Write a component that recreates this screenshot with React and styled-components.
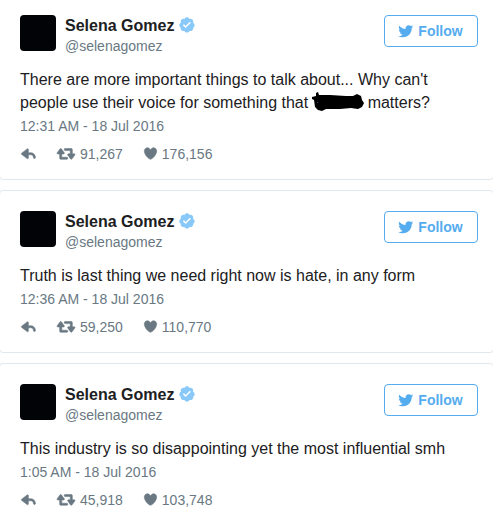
import React from 'react'
import styled, { createGlobalStyle } from 'styled-components'

const tweets = [
    {
        id: 1,
        before: "There are more important things to talk about... Why can't people use their voice for something that ",
        after: 'matters?',
        time: '12:31 AM - 18 Jul 2016',
        retweets: '91,267',
        likes: '176,156',
    },
    {
        id: 2,
        before: 'Truth is last thing we need right now is hate, in any form',
        time: '12:36 AM - 18 Jul 2016',
        retweets: '59,250',
        likes: '110,770',
    },
    {
        id: 3,
        before: 'This industry is so disappointing yet the most influential smh',
        time: '1:05 AM - 18 Jul 2016',
        retweets: '45,918',
        likes: '103,748',
    },
]

const GlobalStyle = createGlobalStyle`
    * {
        box-sizing: border-box;
    }
    body {
        margin: 0;
        overflow-x: hidden;
        background: #fff;
        color: #1c2022;
        font-family: "Liberation Sans", Arial, sans-serif;
        font-size: 16px;
    }
    svg {
        display: block;
        flex: none;
        fill: currentColor;
    }
`

// the feed bleeds past the edges of the window
const Feed = styled.main`
    display: flex;
    flex-direction: column;
    gap: 10px;
    margin: -6px -1px 0;
`

const Card = styled.article`
    padding: 20px 15px 16px 20px;
    border: 1px solid #e1e8ed;
    border-radius: 4px;
`

const Header = styled.header`
    display: flex;
    align-items: flex-start;
    gap: 9px;
`

const Avatar = styled.div`
    width: 36px;
    height: 36px;
    border-radius: 4px;
    background: #020307;
`

const Author = styled.a`
    flex: 1;
    color: inherit;
    text-decoration: none;
`

const Name = styled.span`
    display: flex;
    align-items: center;
    gap: 5px;
    height: 22px;
    font-weight: bold;
`

const Handle = styled.span`
    display: block;
    color: #697882;
    font-size: 14px;
    line-height: 18px;
`

const FollowButton = styled.button`
    display: flex;
    align-items: center;
    justify-content: center;
    gap: 4px;
    width: 94px;
    height: 32px;
    padding: 0 2px 0 0;
    border: 1px solid #55acee;
    border-radius: 4px;
    background: #fff;
    color: #55acee;
    font: bold 14px "Liberation Sans", Arial, sans-serif;
    cursor: pointer;
`

const Text = styled.p`
    margin: 13px 0 0;
    line-height: 23px;
`

const Scribble = styled.svg`
    display: inline-block;
    vertical-align: middle;
    margin: -4px 2px -4px 0;
    fill: #000;
`

const Time = styled.a`
    display: block;
    margin-top: 3px;
    color: #697882;
    font-size: 14px;
    line-height: 18px;
    text-decoration: none;
`

const Actions = styled.div`
    display: flex;
    gap: 20px;
    margin-top: 9px;
`

const Action = styled.button`
    display: flex;
    align-items: center;
    gap: 4px;
    padding: 0;
    border: 0;
    background: none;
    color: #697882;
    font: 14px "Liberation Sans", Arial, sans-serif;
    cursor: pointer;
`

const ActionIcon = styled.svg`
    stroke: currentColor;
    stroke-width: 2;
    stroke-linejoin: round;
`

function BirdIcon() {
    return (
        <svg width="17" height="17" viewBox="0 0 72 72" aria-hidden="true">
            <path d="M68.812 15.14c-2.348 1.04-4.87 1.744-7.52 2.06 2.704-1.62 4.78-4.186 5.757-7.243-2.53 1.5-5.33 2.592-8.314 3.176C56.35 10.59 52.948 9 49.182 9c-7.23 0-13.092 5.86-13.092 13.093 0 1.026.118 2.02.338 2.98C25.543 24.527 15.9 19.318 9.44 11.396c-1.125 1.936-1.77 4.184-1.77 6.58 0 4.543 2.312 8.552 5.824 10.9-2.146-.07-4.165-.658-5.93-1.64-.002.056-.002.11-.002.163 0 6.345 4.513 11.638 10.504 12.84-1.1.298-2.256.457-3.45.457-.845 0-1.666-.078-2.464-.23 1.667 5.2 6.499 8.986 12.23 9.09-4.482 3.512-10.13 5.606-16.26 5.606-1.055 0-2.096-.06-3.122-.184 5.794 3.717 12.676 5.882 20.067 5.882 24.083 0 37.25-19.95 37.25-37.25 0-.565-.013-1.133-.038-1.693 2.558-1.847 4.778-4.15 6.532-6.774z" />
        </svg>
    )
}

function VerifiedIcon() {
    return (
        <svg width="17" height="19" viewBox="2 6 64 72" role="img" aria-label="Verified">
            <path fill="#88c9f9" d="M3 37.315c0 4.125 2.162 7.726 5.363 9.624-.056.467-.09.937-.09 1.42 0 6.103 4.72 11.045 10.546 11.045 1.295 0 2.542-.234 3.687-.686C24.22 62.4 27.827 64.93 32 64.93c4.174 0 7.782-2.53 9.49-6.213 1.148.45 2.39.685 3.69.685 5.826 0 10.546-4.94 10.546-11.045 0-.483-.037-.953-.093-1.42C58.837 45.04 61 41.44 61 37.314c0-4.37-2.42-8.15-5.933-9.946.427-1.203.658-2.5.658-3.865 0-6.104-4.72-11.045-10.545-11.045-1.302 0-2.543.232-3.69.688-1.707-3.685-5.315-6.216-9.49-6.216-4.173 0-7.778 2.53-9.492 6.216-1.146-.455-2.393-.688-3.688-.688-5.827 0-10.545 4.94-10.545 11.045 0 1.364.23 2.662.656 3.864C5.42 29.163 3 32.944 3 37.314z" />
            <path fill="#fff" d="M17.87 39.08l7.015 6.978c.585.582 1.35.873 2.116.873.77 0 1.542-.294 2.127-.883.344-.346 15.98-15.974 15.98-15.974 1.172-1.172 1.172-3.07 0-4.243-1.17-1.17-3.07-1.172-4.242 0l-13.87 13.863-4.892-4.868c-1.174-1.168-3.074-1.164-4.242.01-1.168 1.176-1.163 3.075.01 4.244z" />
        </svg>
    )
}

function ReplyIcon() {
    return (
        <ActionIcon width="16" height="19" viewBox="0 -2 61 72" aria-hidden="true">
            <path d="M41 31h-9V19c0-1.14-.647-2.183-1.668-2.688-1.022-.507-2.243-.39-3.15.302l-21 16C5.438 33.18 5 34.064 5 35s.437 1.82 1.182 2.387l21 16c.533.405 1.174.613 1.82.613.453 0 .908-.103 1.33-.312C31.354 53.183 32 52.14 32 51V39h9c5.514 0 10 4.486 10 10 0 2.21 1.79 4 4 4s4-1.79 4-4c0-9.925-8.075-18-18-18z" />
        </ActionIcon>
    )
}

function RetweetIcon() {
    return (
        <ActionIcon width="20" height="19" viewBox="0 -2 74 72" aria-hidden="true">
            <path d="M70.676 36.644C70.166 35.636 69.13 35 68 35h-7V19c0-2.21-1.79-4-4-4H34c-2.21 0-4 1.79-4 4s1.79 4 4 4h18c.552 0 .998.446 1 .998V35h-7c-1.13 0-2.165.636-2.676 1.644-.51 1.01-.412 2.22.257 3.13l11 15C55.148 55.545 56.046 56 57 56s1.855-.455 2.42-1.226l11-15c.668-.912.767-2.122.256-3.13zM40 48H22c-.54 0-.97-.427-.992-.96L21 36h7c1.13 0 2.166-.636 2.677-1.644.51-1.01.412-2.22-.257-3.13l-11-15C18.854 15.455 17.956 15 17 15s-1.854.455-2.42 1.226l-11 15c-.667.912-.767 2.122-.255 3.13C3.835 35.365 4.87 36 6 36h7l.012 16.003c.002 2.208 1.792 3.997 4 3.997h22.99c2.208 0 4-1.79 4-4s-1.792-4-4-4z" />
        </ActionIcon>
    )
}

function HeartIcon() {
    return (
        <ActionIcon width="15" height="19" viewBox="0 -2 54 72" aria-hidden="true">
            <path d="M38.723 12c-7.187 0-11.16 7.306-11.723 8.131C26.437 19.306 22.504 12 15.277 12 8.791 12 3.533 18.163 3.533 24.647 3.533 39.964 21.891 55.907 27 56c5.109-.093 23.467-16.036 23.467-31.353C50.467 18.163 45.209 12 38.723 12z" />
        </ActionIcon>
    )
}

// marker pen over the swear word
function CrossedOut() {
    return (
        <Scribble width="53" height="20" viewBox="1 2 53 20" overflow="visible" aria-hidden="true">
            <path d="M0 5L4 4L4 1L6 0L7 3L18 3L34 4L41 4L45 2L49 4L50 8L52 11L50 15L46 17L39 16L28 17L18 17L14 17L10 19L6 18L3 15L2 8L0 7z" />
            <path fill="#3b4a86" d="M5 10h1v1h-1z" />
        </Scribble>
    )
}

function Tweet({tweet}) {
    return (
        <Card>
            <Header>
                <Avatar />
                <Author href="#selenagomez">
                    <Name>Selena Gomez <VerifiedIcon /></Name>
                    <Handle>@selenagomez</Handle>
                </Author>
                <FollowButton type="button"><BirdIcon />Follow</FollowButton>
            </Header>
            <Text>
                {tweet.before}
                {tweet.after ? <><CrossedOut />{tweet.after}</> : null}
            </Text>
            <Time href={`#tweet-${tweet.id}`}>{tweet.time}</Time>
            <Actions>
                <Action type="button" aria-label="Reply"><ReplyIcon /></Action>
                <Action type="button"><RetweetIcon />{tweet.retweets}</Action>
                <Action type="button"><HeartIcon />{tweet.likes}</Action>
            </Actions>
        </Card>
    )
}

function App() {
    return (
        <>
            <GlobalStyle />
            <Feed>
                {tweets.map((tweet) => <Tweet key={tweet.id} tweet={tweet} />)}
            </Feed>
        </>
    )
}

export default App
